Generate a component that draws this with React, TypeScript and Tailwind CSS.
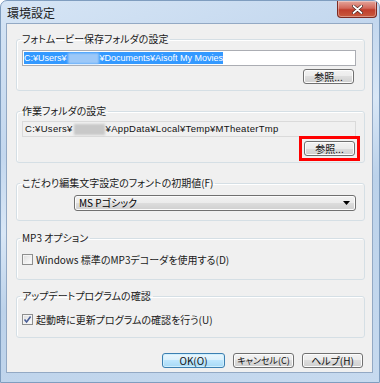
import React from "react";

const jp = "[font-family:'Noto_Sans_CJK_JP',sans-serif] [font-feature-settings:'palt']";

function Button({
  children,
  primary = false,
  className = "",
}: {
  children: React.ReactNode;
  primary?: boolean;
  className?: string;
}) {
  return (
    <button
      type="button"
      className={
        "flex h-[15px] items-center justify-center whitespace-nowrap rounded-[3px] border leading-[12px] text-[#111] " +
        (primary
          ? "border-[#3c7fb1] bg-[linear-gradient(#eaf6fd,#d9f0fc_50%,#bee6fd_50%,#a7d9f5)] shadow-[inset_0_0_0_1px_#cfeffd] "
          : "border-[#707070] bg-[linear-gradient(#f2f2f2,#ebebeb_50%,#dddddd_50%,#cfcfcf)] shadow-[inset_0_0_0_1px_#fcfcfc] ") +
        className
      }
    >
      {children}
    </button>
  );
}

function Group({
  title,
  children,
  className = "",
}: {
  title: string;
  children: React.ReactNode;
  className?: string;
}) {
  return (
    <fieldset
      className={
        "rounded-[3px] border border-[#d5dfe5] pl-[5px] pr-[8px] shadow-[inset_1px_1px_0_#ffffff] " + className
      }
    >
      <legend className="ml-[-2px] px-[2px] text-[10px] leading-[12px] text-[#1a1a1a]">{title}</legend>
      {children}
    </fieldset>
  );
}

function Checkbox({ checked = false }: { checked?: boolean }) {
  return (
    <span className="flex h-[11px] w-[11px] items-center justify-center border border-[#8e8f8f] bg-[linear-gradient(135deg,#dcdcdc,#ffffff)] shadow-[inset_0_0_0_1px_#f4f4f4]">
      {checked && (
        <svg width="9" height="9" viewBox="0 0 9 9">
          <path d="M1.5 4.5 L3.6 7 L7.6 1.5" fill="none" stroke="#4a5f97" strokeWidth="1.6" />
        </svg>
      )}
    </span>
  );
}

export default function App() {
  return (
    <div
      className={
        "flex h-[383px] w-[380px] flex-col overflow-hidden rounded-t-[7px] border border-[#7f9dbf] bg-[linear-gradient(160deg,#d6e5f5_0%,#c3d7ee_30%,#d9e7f6_45%,#bcd2ea_60%,#c7daef_100%)] text-black " +
        jp
      }
    >
      {/* title bar */}
      <div className="flex h-[22px] items-start justify-between pl-[6px] pr-[2px]">
        <span className="mt-[4px] text-[12px] leading-[15px] text-[#1e1e1e]">環境設定</span>
        <button
          type="button"
          className="flex h-[17px] w-[40px] items-center justify-center rounded-b-[4px] border border-t-0 border-[#7c2a22] bg-[linear-gradient(#e4a69c,#d2685a_45%,#c03e2c_55%,#c85a3e)] shadow-[inset_0_0_0_1px_rgba(255,255,255,0.35)]"
        >
          <svg width="11" height="9" viewBox="0 0 11 9">
            <path d="M1.5 1 L9.5 8 M9.5 1 L1.5 8" stroke="#3b1a16" strokeWidth="3" strokeLinecap="round" />
            <path d="M1.5 1 L9.5 8 M9.5 1 L1.5 8" stroke="#ffffff" strokeWidth="1.8" strokeLinecap="round" />
          </svg>
        </button>
      </div>

      {/* client area */}
      <div className="mb-[9px] ml-[5px] mr-[6px] flex flex-1 flex-col border border-[#93a9c4] bg-[#f0f0f0] pl-[9px] pr-[7px] pt-[9px]">
        <Group title="フォトムービー保存フォルダの設定" className="pb-[6px] pt-[5px]">
          <div className="flex h-[16px] items-center border border-[#abadb3] bg-white px-[1px]">
            <span className="flex h-[12px] items-center bg-[#3399ff] text-[9px] leading-[12px] text-white [font-family:'Liberation_Sans',sans-serif]">
              <span>C:¥Users¥</span>
              <span className="mx-[1px] h-[11px] w-[31px] bg-[#9cc8f8] blur-[1px]" />
              <span>¥Documents¥Aisoft My Movies</span>
            </span>
          </div>
          <div className="mt-[3px] flex justify-end pr-[2px]">
            <Button className="w-[51px] text-[10px]">参照...</Button>
          </div>
        </Group>

        <Group title="作業フォルダの設定" className="mt-[14px] pb-[6px] pt-[4px]">
          <div className="flex h-[16px] items-center border border-[#dadada] bg-[#f0f0f0] px-[2px]">
            <span className="flex items-center text-[9.5px] leading-[12px] tracking-[0.3px] text-[#111] [font-family:'Liberation_Sans',sans-serif]">
              <span>C:¥Users¥</span>
              <span className="mx-[1px] h-[11px] w-[31px] bg-[#c8c8c8] blur-[1px]" />
              <span>¥AppData¥Local¥Temp¥MTheaterTmp</span>
            </span>
          </div>
          <div className="mt-[4px] flex justify-end pr-[1px]">
            <div className="relative">
              <Button className="w-[51px] text-[10px]">参照...</Button>
              {/* highlight annotation */}
              <span className="pointer-events-none absolute -inset-[5px] border-[3px] border-[#ff0000]" />
            </div>
          </div>
        </Group>

        <Group title="こだわり編集文字設定のフォントの初期値(F)" className="mt-[14px] pb-[9px] pt-[6px]">
          <div className="ml-[52px] flex h-[16px] items-center justify-between rounded-[3px] border border-[#707070] bg-[linear-gradient(#f2f2f2,#ebebeb_50%,#dddddd_50%,#cfcfcf)] pl-[4px] pr-[5px] shadow-[inset_0_0_0_1px_#fcfcfc]">
            <span className="text-[10px] leading-[12px]">MS Pゴシック</span>
            <svg width="7" height="4" viewBox="0 0 7 4">
              <path d="M0 0 H7 L3.5 4 Z" fill="#000000" />
            </svg>
          </div>
        </Group>

        <Group title="MP3 オプション" className="mt-[11px] pb-[13px] pt-[9px]">
          <label className="flex items-center gap-[3px] text-[10px] leading-[13px] text-[#1a1a1a]">
            <Checkbox />
            <span>Windows 標準のMP3デコーダを使用する(D)</span>
          </label>
        </Group>

        <Group title="アップデートプログラムの確認" className="mt-[10px] pb-[11px] pt-[11px]">
          <label className="flex items-center gap-[3px] text-[10px] leading-[13px] text-[#1a1a1a]">
            <Checkbox checked />
            <span>起動時に更新プログラムの確認を行う(U)</span>
          </label>
        </Group>

        <div className="mt-[15px] flex justify-end gap-[8px] pr-[2px]">
          <Button primary className="w-[63px] text-[10px]">OK(O)</Button>
          <Button className="w-[61px] text-[9px]">キャンセル(C)</Button>
          <Button className="w-[61px] text-[10px]">ヘルプ(H)</Button>
        </div>
      </div>
    </div>
  );
}
